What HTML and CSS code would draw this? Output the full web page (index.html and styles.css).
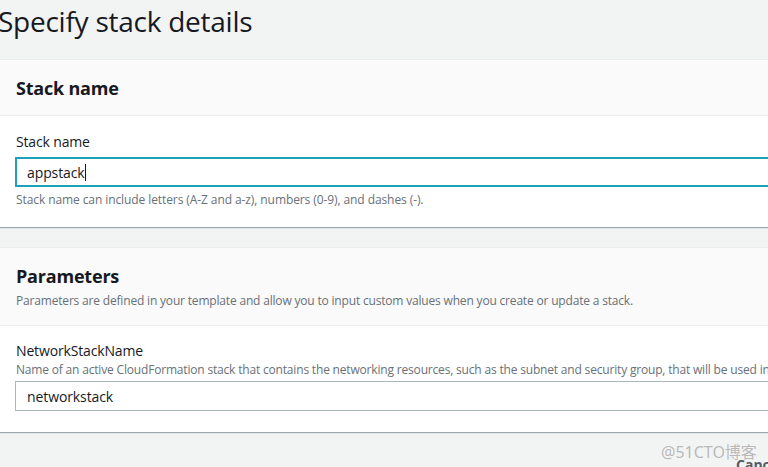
FILE: index.html
```html
<!DOCTYPE html>
<html lang="en">
<head>
<meta charset="utf-8">
<title>Specify stack details</title>
<link rel="stylesheet" href="styles.css">
</head>
<body>
<div class="page">
  <h1 class="title">Specify stack details</h1>

  <section class="card">
    <header class="card-head">
      <h2 class="card-title">Stack name</h2>
    </header>
    <div class="card-body">
      <label class="field-label">Stack name</label>
      <div class="input input-focus"><span class="value">appstack</span><span class="caret"></span></div>
      <p class="hint">Stack name can include letters (A-Z and a-z), numbers (0-9), and dashes (-).</p>
    </div>
  </section>

  <section class="card">
    <header class="card-head">
      <h2 class="card-title">Parameters</h2>
      <p class="card-desc">Parameters are defined in your template and allow you to input custom values when you create or update a stack.</p>
    </header>
    <div class="card-body card-body-params">
      <label class="field-label">NetworkStackName</label>
      <p class="field-desc">Name of an active CloudFormation stack that contains the networking resources, such as the subnet and security group, that will be used in this stack.</p>
      <div class="input"><span class="value">networkstack</span></div>
    </div>
  </section>

  <div class="actions">
    <span class="cancel">Cancel</span>
  </div>
  <div class="watermark">@51CTO博客</div>
</div>
</body>
</html>
```

FILE: styles.css
```css
* { box-sizing: border-box; }
html, body {
  margin: 0;
  padding: 0;
  background: #f2f3f3;
  overflow: hidden;
}
body {
  font-family: "Open Sans", "Noto Sans", Arial, sans-serif;
  color: #16191f;
  width: 768px;
  height: 467px;
}
.page {
  position: relative;
  width: 1100px;
}
.title {
  margin: 0 0 0 -2px;
  padding-top: 1px;
  font-size: 28px;
  line-height: 40px;
  font-weight: 400;
  letter-spacing: -0.25px;
  color: #16191f;
  height: 59px;
}
.card {
  background: #ffffff;
  border-top: 1px solid #eaeded;
  box-shadow: 0 1px 1px 0 rgba(0, 28, 36, 0.35);
  margin-bottom: 20px;
}
.card-head {
  background: #fafafa;
  border-bottom: 1px solid #eaeded;
  padding: 16px 16px 15px;
}
.card-title {
  margin: 0;
  font-size: 18px;
  line-height: 24px;
  font-weight: 700;
  letter-spacing: -0.2px;
}
.card-desc {
  margin: 5px 0 1px;
  font-size: 12px;
  line-height: 16px;
  letter-spacing: -0.18px;
  color: #687078;
}
.card-body {
  padding: 15px 16px 19px 16px;
}
.card-body-params {
  padding: 14px 16px 21px 16px;
}
.field-label {
  display: block;
  font-size: 14px;
  line-height: 22px;
  letter-spacing: -0.15px;
}
.field-desc {
  margin: 0 0 3px;
  font-size: 12px;
  line-height: 16px;
  letter-spacing: -0.18px;
  color: #687078;
  white-space: nowrap;
}
.input {
  margin-left: -1px;
  height: 30px;
  border: 1px solid #aab7b8;
  background: #fff;
  display: flex;
  align-items: center;
  padding: 0 11px;
  font-size: 14px;
  letter-spacing: -0.1px;
  color: #16191f;
}
.input-focus {
  margin-top: 4px;
  border: 2px solid #1ea0b7;
  padding: 0 10px;
}
.caret {
  width: 1px;
  height: 17px;
  background: #16191f;
  margin-left: 0;
}
.hint {
  margin: 5px 0 0;
  font-size: 12px;
  line-height: 16px;
  letter-spacing: -0.09px;
  color: #687078;
}
.actions {
  display: flex;
  padding-top: 2px;
}
.cancel {
  margin-left: 736px;
  font-size: 14px;
  font-weight: 700;
  color: #545b64;
  line-height: 22px;
}
.watermark {
  position: absolute;
  left: 661px;
  top: 440px;
  font-size: 16px;
  line-height: 24px;
  color: #b8b8b8;
  font-family: "Noto Sans", "Noto Sans CJK SC", sans-serif;
  text-shadow: 0 0 1px #fff;
}
```
